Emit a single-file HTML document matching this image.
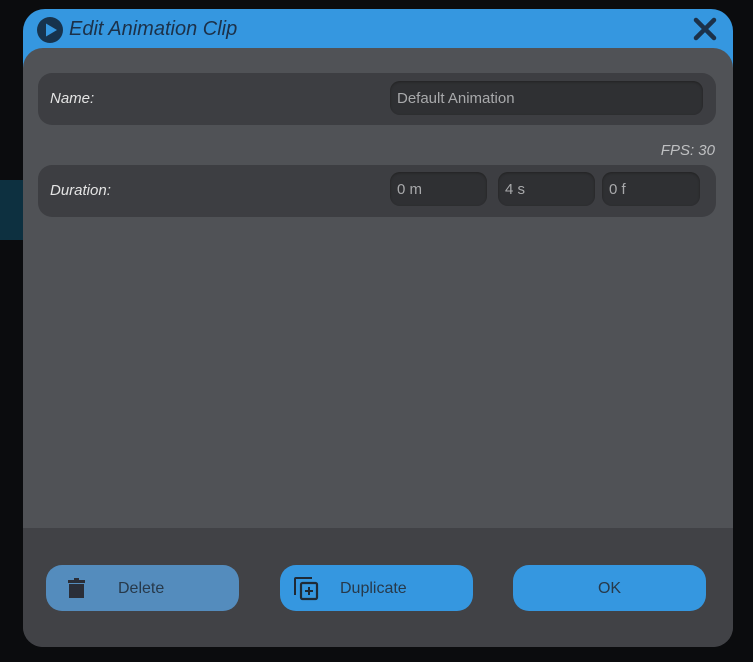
<!DOCTYPE html>
<html><head><style>
body{margin:0;width:753px;height:662px;background:#0b0c0e;position:relative;overflow:hidden;font-family:"Liberation Sans",sans-serif}
.a{position:absolute}
.hdr{left:23px;top:9px;width:710px;height:80px;background:#3597e0;border-radius:22px 22px 0 0}
.body{left:23px;top:48px;width:710px;height:599px;background:#505256;border-radius:20px;overflow:hidden}
.foot{left:0;top:480px;width:710px;height:119px;background:#414246}
.row{background:#3d3e42;border-radius:14px}
.inp{background:#2f3033;border-radius:10px;color:#a8a9ab;font-size:15px;line-height:35px;padding-left:7px;box-sizing:border-box;box-shadow:inset 0 1px 2px #222}
.lbl{color:#e4e4e4;font-style:italic;font-size:15px}
.btn{border-radius:16px;height:46px;width:193px;top:565px;color:#27394a;font-size:16px;line-height:47px}
</style></head><body>
<div class="a" style="left:0;top:180px;width:23px;height:60px;background:#0d3040"></div>
<div class="a hdr"></div>
<svg class="a" style="left:36px;top:16px" width="28" height="28"><circle cx="14" cy="14" r="13" fill="#17334d"/><path d="M10 7.5 L21 14 L10 20.5Z" fill="#3597e0"/></svg>
<div class="a" style="left:69px;top:18px;font-size:20px;font-style:italic;color:#1c3149">Edit Animation Clip</div>
<svg class="a" style="left:692px;top:16px" width="26" height="26"><path d="M4 4L22 22M22 4L4 22" stroke="#1c3149" stroke-width="4.5" stroke-linecap="round"/></svg>
<div class="a body">
 <div class="a foot"></div>
</div>
<div class="a row" style="left:38px;top:73px;width:678px;height:52px"></div>
<div class="a lbl" style="left:50px;top:90px">Name:</div>
<div class="a inp" style="left:390px;top:81px;width:313px;height:34px">Default Animation</div>
<div class="a" style="right:38px;top:142px;color:#bfc0c2;font-style:italic;font-size:15px">FPS: 30</div>
<div class="a row" style="left:38px;top:165px;width:678px;height:52px"></div>
<div class="a lbl" style="left:50px;top:182px">Duration:</div>
<div class="a inp" style="left:390px;top:172px;width:97px;height:34px">0 m</div>
<div class="a inp" style="left:498px;top:172px;width:97px;height:34px">4 s</div>
<div class="a inp" style="left:602px;top:172px;width:98px;height:34px">0 f</div>
<div class="a btn" style="left:46px;background:#548cbd"><svg class="a" style="left:22px;top:13px" width="18" height="20"><rect x="0" y="2" width="17" height="3" fill="#2a2e38"/><rect x="6" y="0" width="5" height="3" fill="#2a2e38"/><rect x="1" y="6" width="15" height="14" fill="#2a2e38"/></svg><span class="a" style="left:72px">Delete</span></div>
<div class="a btn" style="left:280px;background:#3597e0"><svg class="a" style="left:13px;top:11px" width="28" height="26"><path d="M2 19V3a1 1 0 0 1 1-1h16" fill="none" stroke="#1f2a36" stroke-width="2"/><rect x="8" y="7" width="16" height="16" rx="1.5" fill="none" stroke="#1f2a36" stroke-width="2.2"/><path d="M16 11v8M12 15h8" stroke="#1f2a36" stroke-width="2"/></svg><span class="a" style="left:60px">Duplicate</span></div>
<div class="a btn" style="left:513px;background:#3597e0;text-align:center">OK</div>
</body></html>
